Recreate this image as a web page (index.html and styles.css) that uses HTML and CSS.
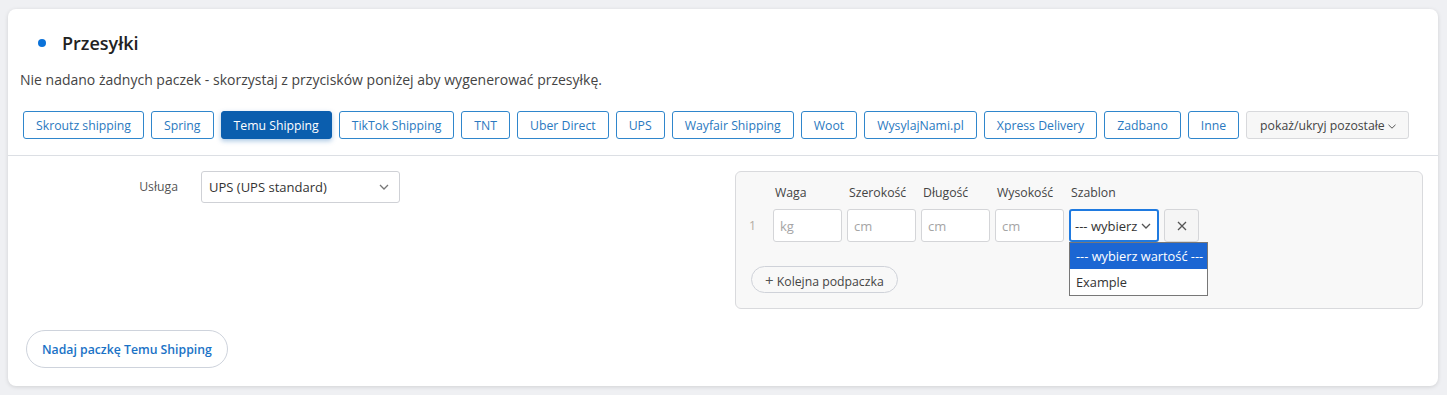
FILE: index.html
```html
<!DOCTYPE html>
<html lang="pl">
<head>
<meta charset="utf-8">
<title>Przesyłki</title>
<link rel="stylesheet" href="styles.css">
</head>
<body>
<div class="card">
  <div class="head">
    <h2 class="title"><span class="dot"></span>Przesyłki</h2>
    <p class="desc">Nie nadano żadnych paczek - skorzystaj z przycisków poniżej aby wygenerować przesyłkę.</p>
    <div class="carriers">
      <button class="cbtn">Skroutz shipping</button>
      <button class="cbtn">Spring</button>
      <button class="cbtn active">Temu Shipping</button>
      <button class="cbtn">TikTok Shipping</button>
      <button class="cbtn">TNT</button>
      <button class="cbtn">Uber Direct</button>
      <button class="cbtn">UPS</button>
      <button class="cbtn">Wayfair Shipping</button>
      <button class="cbtn">Woot</button>
      <button class="cbtn">WysylajNami.pl</button>
      <button class="cbtn">Xpress Delivery</button>
      <button class="cbtn">Zadbano</button>
      <button class="cbtn">Inne</button>
      <button class="cbtn more">pokaż/ukryj pozostałe<svg class="mchev" width="8" height="5" viewBox="0 0 8 5"><path d="M0.5 0.8 L4 4.2 L7.5 0.8" fill="none" stroke="#555" stroke-width="1"/></svg></button>
    </div>
  </div>
  <div class="body">
    <div class="cols">
      <div class="left">
        <label class="lbl">Usługa</label>
        <div class="select">UPS (UPS standard)<svg class="schev" width="10" height="6" viewBox="0 0 10 6"><path d="M1 1 L5 5 L9 1" fill="none" stroke="#777" stroke-width="1.3"/></svg></div>
      </div>
      <div class="panel">
        <div class="pgrid">
          <span></span>
          <span class="ph">Waga</span>
          <span class="ph">Szerokość</span>
          <span class="ph">Długość</span>
          <span class="ph">Wysokość</span>
          <span class="ph">Szablon</span>
          <span></span>
          <span class="num">1</span>
          <div class="inp">kg</div>
          <div class="inp">cm</div>
          <div class="inp">cm</div>
          <div class="inp">cm</div>
          <div class="tsel">
            <div class="tsel-box"><span class="tsel-txt">--- wybierz wartość ---</span><svg class="tchev" width="10" height="6" viewBox="0 0 10 6"><path d="M1 1 L5 5 L9 1" fill="none" stroke="#555" stroke-width="1.3"/></svg></div>
            <ul class="dropdown">
              <li class="opt sel">--- wybierz wartość ---</li>
              <li class="opt">Example</li>
            </ul>
          </div>
          <button class="xbtn" aria-label="Usuń"><svg width="10" height="10" viewBox="0 0 10 10"><path d="M1 1 L9 9 M9 1 L1 9" fill="none" stroke="#555" stroke-width="1.3"/></svg></button>
        </div>
        <button class="addbtn"><span class="plus">+</span> Kolejna podpaczka</button>
      </div>
    </div>
    <button class="send">Nadaj paczkę Temu Shipping</button>
  </div>
</div>
</body>
</html>
```
FILE: styles.css
```css
* { box-sizing: border-box; }
html, body { margin: 0; }
body {
  background: #eff0f3;
  padding: 9px 9px 9px 8px;
  font-family: "Open Sans", "Noto Sans", sans-serif;
  color: #333;
}
.card {
  background: #fff;
  border-radius: 8px;
  box-shadow: 0 1px 4px rgba(0,0,0,0.13);
  height: 377px;
}
.head {
  padding: 22px 15px 16px 15px;
  border-bottom: 1px solid #dcdfe4;
}
.title {
  margin: 0 0 0 15px;
  display: flex;
  align-items: center;
  font-size: 18px;
  line-height: 24px;
  font-weight: 600;
  color: #222;
}
.dot {
  width: 8px; height: 8px;
  border-radius: 50%;
  background: #0b72d9;
  margin-right: 16px;
}
.desc {
  margin: 15px 0 0 -3px;
  font-size: 14px;
  line-height: 20px;
  color: #444;
}
.carriers {
  margin-top: 21px;
  display: flex;
  gap: 7px;
}
.cbtn {
  height: 28px;
  padding: 0 12px;
  border: 1px solid #2f86cc;
  border-radius: 3px;
  background: #fff;
  color: #2a79c0;
  font-family: inherit;
  font-size: 12.25px;
  white-space: nowrap;
}
.cbtn.active {
  background: #0b5eae;
  border-color: #0b5eae;
  color: #fff;
  box-shadow: 0 2px 5px rgba(11,94,174,0.35);
}
.cbtn.more {
  background: #f7f7f7;
  border-color: #d8d9dc;
  color: #444;
  display: flex;
  align-items: center;
  gap: 3px;
  padding: 0 12px 0 13px;
}
.mchev { margin-top: 2px; }
.body {
  padding: 15px 15px 0 15px;
}
.cols {
  display: grid;
  grid-template-columns: 700px 688px;
  column-gap: 12px;
}
.left {
  display: flex;
  align-items: flex-start;
}
.lbl {
  width: 155px;
  text-align: right;
  font-size: 12.25px;
  color: #555;
  line-height: 32px;
  margin-right: 23px;
}
.select {
  width: 199px;
  height: 32px;
  border: 1px solid #cfd1d6;
  border-radius: 3px;
  font-size: 13px;
  color: #333;
  padding: 0 9px 0 7px;
  display: flex;
  align-items: center;
  justify-content: space-between;
}
.schev { margin-right: 1px; }
.panel {
  background: #f8f8f8;
  border: 1px solid #d9dadd;
  border-radius: 6px;
  padding: 12px 14px 15px 13px;
  height: 138px;
}
.pgrid {
  display: grid;
  grid-template-columns: 19px 69px 69px 69px 69px 90px 35px;
  column-gap: 5px;
  row-gap: 7px;
  align-items: center;
}
.ph {
  font-size: 12.25px;
  line-height: 18px;
  color: #444;
  padding-left: 2px;
  white-space: nowrap;
}
.num {
  font-size: 12.25px;
  color: #b3aca3;
}
.inp {
  height: 33px;
  border: 1px solid #d4d5d8;
  border-radius: 3px;
  background: #fff;
  font-size: 13px;
  color: #a5a5a5;
  padding: 0 6px;
  display: flex;
  align-items: center;
}
.tsel { position: relative; height: 33px; }
.tsel-box {
  height: 33px;
  border: 2px solid #1f7ae0;
  border-radius: 3px;
  background: #fff;
  font-size: 13px;
  color: #333;
  padding: 0 19px 0 4px;
  display: flex;
  align-items: center;
  overflow: hidden;
  white-space: nowrap;
  position: relative;
}
.tsel-txt { overflow: hidden; }
.tchev { position: absolute; right: 6px; top: 12px; }
.dropdown {
  position: absolute;
  top: 33px;
  left: 0;
  width: 139px;
  margin: 0;
  padding: 0;
  list-style: none;
  background: #fff;
  border: 1px solid #777;
  z-index: 5;
}
.opt {
  height: 26px;
  line-height: 26px;
  font-size: 12.8px;
  color: #333;
  padding-left: 6px;
  white-space: nowrap;
}
.opt.sel { background: #1b66d3; color: #fff; }
.xbtn {
  height: 33px;
  border: 1px solid #d5d6d9;
  border-radius: 3px;
  background: #f5f5f5;
  padding: 0;
  display: flex;
  align-items: center;
  justify-content: center;
}
.addbtn {
  margin-top: 24px;
  margin-left: 2px;
  height: 27px;
  padding: 0 13px;
  border: 1px solid #cfd2d9;
  border-radius: 14px;
  background: #f8f8f8;
  font-family: inherit;
  font-size: 12.25px;
  color: #444;
}
.plus { font-size: 15px; color: #555; }
.send {
  margin-top: 21px;
  margin-left: 3px;
  height: 38px;
  padding: 0 15px;
  border: 1px solid #ced3dc;
  border-radius: 19px;
  background: #fff;
  color: #1a72c6;
  font-family: inherit;
  font-size: 12.25px;
  font-weight: 600;
}
```
